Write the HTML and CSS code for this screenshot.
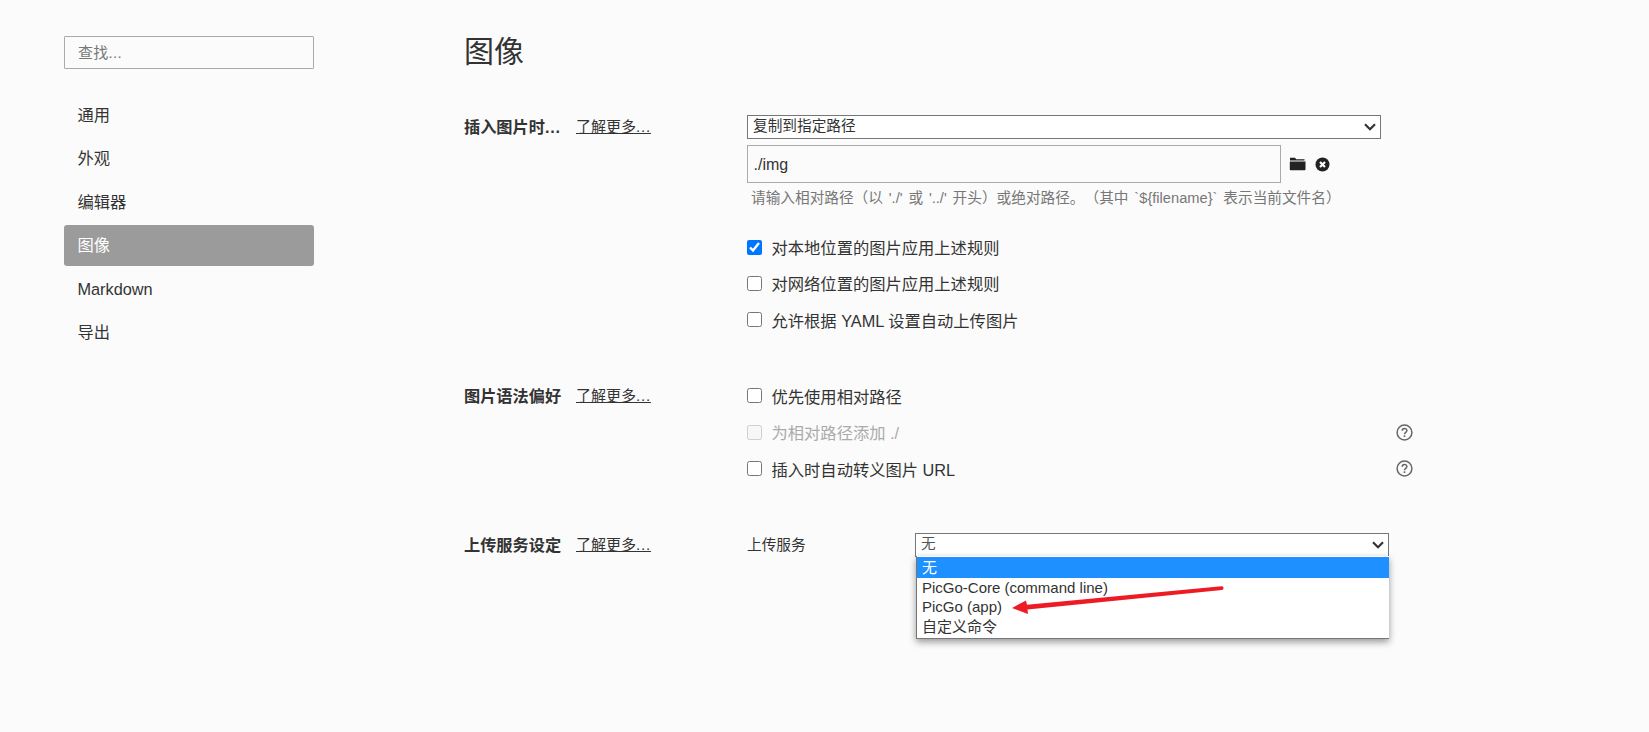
FILE: index.html
```html
<!DOCTYPE html>
<html lang="zh">
<head>
<meta charset="utf-8">
<title>偏好设置</title>
<link rel="stylesheet" href="styles.css">
</head>
<body>
<div class="app">
  <aside class="sidebar">
    <input class="search" type="text" placeholder="查找...">
    <nav class="nav">
      <div class="nav-item">通用</div>
      <div class="nav-item">外观</div>
      <div class="nav-item">编辑器</div>
      <div class="nav-item active">图像</div>
      <div class="nav-item">Markdown</div>
      <div class="nav-item">导出</div>
    </nav>
  </aside>
  <main class="main">
    <h1 class="title">图像</h1>

    <section class="section first">
      <div class="head"><b class="label">插入图片时<span class="dots">...</span></b><a class="more">了解更多<span class="dots">...</span></a></div>
      <div class="body">
        <select class="select wide"><option>复制到指定路径</option></select>
        <div class="path-row">
          <input class="path" type="text" value="./img">
          <svg class="folder" width="17" height="14" viewBox="0 0 17 14"><path d="M1 .8h5l1.300 1.400H15.500V3.600H1zM.8 4.400h15.700v7.800c0 .7-.5 1.100-1.100 1.100H1.900c-.6 0-1.100-.4-1.100-1.100z" fill="#222"/></svg>
          <svg class="clear" width="15" height="15" viewBox="0 0 15 15"><circle cx="7.500" cy="7.500" r="7" fill="#222"/><path d="M5 5l5 5M10 5l-5 5" stroke="#fbfbfb" stroke-width="2.200"/></svg>
        </div>
        <p class="hint">请输入相对路径（以 './' 或 '../' 开头）或绝对路径。（其中 `${filename}` 表示当前文件名）</p>
        <div class="checks top">
          <label class="check"><input type="checkbox" checked><span>对本地位置的图片应用上述规则</span></label>
          <label class="check"><input type="checkbox"><span>对网络位置的图片应用上述规则</span></label>
          <label class="check"><input type="checkbox"><span>允许根据 YAML 设置自动上传图片</span></label>
        </div>
      </div>
    </section>

    <section class="section second">
      <div class="head"><b class="label">图片语法偏好</b><a class="more">了解更多<span class="dots">...</span></a></div>
      <div class="body">
        <div class="checks">
          <label class="check"><input type="checkbox"><span>优先使用相对路径</span></label>
          <label class="check disabled"><input type="checkbox" disabled><span>为相对路径添加 ./</span>
            <svg class="help" width="17" height="17" viewBox="0 0 17 17"><circle cx="8.500" cy="8.500" r="7.400" fill="none" stroke="#666" stroke-width="1.500"/><path d="M6.200 6.800c0-3 4.700-3 4.700-.2 0 1.800-2.400 1.700-2.400 3.700" fill="none" stroke="#666" stroke-width="1.500"/><rect x="7.700" y="11.300" width="1.600" height="1.700" fill="#666"/></svg>
          </label>
          <label class="check"><input type="checkbox"><span>插入时自动转义图片 URL</span>
            <svg class="help" width="17" height="17" viewBox="0 0 17 17"><circle cx="8.500" cy="8.500" r="7.400" fill="none" stroke="#666" stroke-width="1.500"/><path d="M6.200 6.800c0-3 4.700-3 4.700-.2 0 1.800-2.400 1.700-2.400 3.700" fill="none" stroke="#666" stroke-width="1.500"/><rect x="7.700" y="11.300" width="1.600" height="1.700" fill="#666"/></svg>
          </label>
        </div>
      </div>
    </section>

    <section class="section third">
      <div class="head"><b class="label">上传服务设定</b><a class="more">了解更多<span class="dots">...</span></a></div>
      <div class="body upload">
        <span class="upload-label">上传服务</span>
        <div class="picker">
          <select class="select narrow"><option>无</option></select>
          <ul class="menu">
            <li class="selected">无</li>
            <li>PicGo-Core (command line)</li>
            <li>PicGo (app)</li>
            <li class="last">自定义命令</li>
          </ul>
          <svg class="arrow" width="220" height="40" viewBox="0 0 220 40"><path d="M4 28L18 20.500 19 24.800 213.500 6.300a1.800 1.800 0 0 1 .5 3.600L19.500 29.500 20 34z" fill="#ed1c24"/></svg>
        </div>
      </div>
    </section>
  </main>
</div>
</body>
</html>
```
FILE: styles.css
```css
* { box-sizing: border-box; }
html, body { margin: 0; height: 100%; }
body {
  background: #fbfbfb;
  color: #333;
  font-family: "Liberation Sans", "Noto Sans CJK SC", sans-serif;
  font-size: 16.3px;
  text-spacing-trim: space-all;
  overflow: hidden;
}
.app { display: flex; height: 732px; }

.sidebar { width: 464px; padding: 36px 0 0 64px; flex: none; }
.search {
  display: block;
  width: 250px;
  height: 33px;
  padding: 0 13px;
  border: 1px solid #aaa;
  background: transparent;
  font: 15px "Liberation Sans", "Noto Sans CJK SC", sans-serif;
  border-radius: 1px;
  outline: none;
}
.search::placeholder { color: #777; letter-spacing: .3px; }
.nav { width: 250px; margin-top: 26px; }
.nav-item {
  height: 41px;
  margin-bottom: 2.400px;
  padding-left: 13.500px;
  line-height: 41px;
  font-size: 16.300px;
  border-radius: 3px;
}
.nav-item.active { background: #9b9b9b; color: #fff; }

.main { flex: 1; padding-top: 35px; }
.title { margin: 0; height: 34px; font-size: 30px; line-height: 34px; font-weight: 400; color: #333; }

.section { display: flex; }
.first { margin-top: 46px; }
.second { margin-top: 52px; }
.third { margin-top: 52px; }
.head { width: 283px; flex: none; display: flex; line-height: 24px; }
.label { width: 112px; flex: none; font-size: 16.200px; font-weight: 700; white-space: nowrap; }
.more { font-size: 15px; line-height: 23px; text-decoration: underline; color: #333; white-space: nowrap; }
.dots { letter-spacing: .8px; }
.body { flex: 1; }

.select {
  display: block;
  height: 24px;
  padding: 0 0 3px 5px;
  border: 1.500px solid #767676;
  border-radius: 0;
  appearance: none;
  background: #fff url("data:image/svg+xml,%3Csvg xmlns='http://www.w3.org/2000/svg' width='12' height='8' viewBox='0 0 12 8'%3E%3Cpath d='M1 1.200l5 5 5-5' fill='none' stroke='%23333' stroke-width='2.200'/%3E%3C/svg%3E") no-repeat right 4px center;
  color: #333;
  font: 14.670px "Liberation Sans", "Noto Sans CJK SC", sans-serif;
  outline: none;
}
.wide { width: 634px; }
.narrow { width: 474px; color: #555; padding-bottom: 1px; }

.path-row { display: flex; align-items: center; margin-top: 6px; }
.path {
  width: 534px;
  height: 38px;
  padding: 2px 5.500px 0;
  border: 1px solid #aaa;
  background: transparent;
  color: #333;
  font: 16px "Liberation Sans", "Noto Sans CJK SC", sans-serif;
  outline: none;
}
.folder { margin-left: 8px; }
.clear { margin-left: 9px; }
.hint { margin: 5px 0 0 4px; font-size: 14.670px; line-height: 20px; color: #777; white-space: nowrap; word-spacing: 1.800px; }

.checks { display: flex; flex-direction: column; gap: 12.400px; width: 666px; }
.top { margin-top: 27px; }
.check { display: flex; align-items: center; height: 24px; white-space: nowrap; }
.check input { width: 15px; height: 15px; margin: 0 9.500px 0 0; flex: none; }
.check.disabled { color: #aaa; }
.help { margin-left: auto; }

.upload { display: flex; align-items: flex-start; }
.upload-label { width: 168px; flex: none; font-size: 14.670px; line-height: 24px; }
.picker { position: relative; }
.menu {
  position: absolute;
  left: 1px;
  top: 23px;
  width: 473px;
  margin: 0;
  padding: 1px 0 0;
  list-style: none;
  background: #fff;
  border: 1px solid #767676;
  border-width: 0 0 1.500px 1px;
  box-shadow: 0 3px 7px rgba(0, 0, 0, 0.4);
  font-size: 15px;
}
.menu li { height: 19.500px; padding-left: 5px; line-height: 19px; }
.menu li.selected { height: 21px; background: #1e90ff; color: #fff; line-height: 22px; }
.menu li.last { height: 21px; line-height: 20px; }
.arrow { position: absolute; left: 93px; top: 47px; }
```
